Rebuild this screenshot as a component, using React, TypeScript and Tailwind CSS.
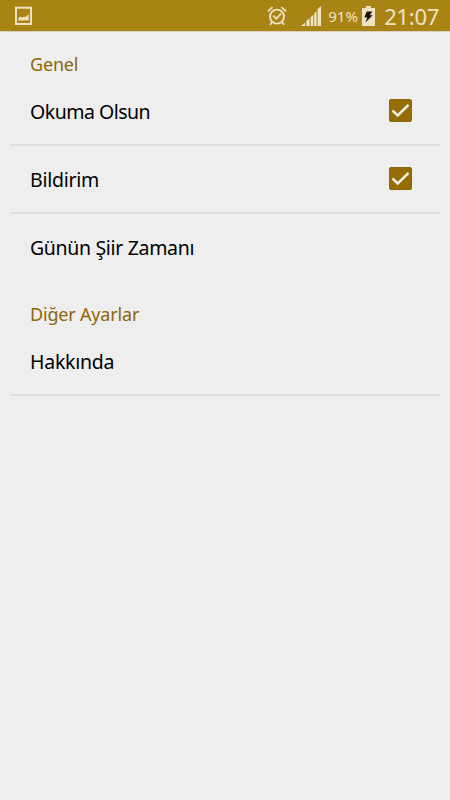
import { useState } from "react";
import clsx from "clsx";

function StatusBar() {
  return (
    <header className="flex h-[31px] items-center bg-[#a98314] pl-[15px] pr-[11px] text-[#efe3c2] shadow-[0_1px_1px_#d9d2be]">
      <svg className="h-[19px] w-[18px]" viewBox="0 0 18 19" fill="none">
        <rect x="1" y="1.7" width="15" height="16.3" stroke="currentColor" strokeWidth="2" />
        <path d="M3.2 14.5V12.5L5.5 10.5L7.5 11.5L9 10.5L10.5 11L13.7 8V14.5Z" fill="currentColor" />
      </svg>

      <div className="ml-auto flex items-center">
        <svg className="h-5 w-5" viewBox="0 0 20 20" fill="none" stroke="currentColor" strokeLinecap="round">
          <circle cx="10" cy="10.6" r="7" strokeWidth="1.9" />
          <path d="M1.5 4.8L5 1.7M18.5 4.8L15 1.7" strokeWidth="1.8" />
          <path d="M4.8 16.2L3.4 18.2M15.2 16.2L16.6 18.2" strokeWidth="1.8" />
          <path d="M6.7 10.2L9.3 12.7L13.7 8" strokeWidth="1.8" />
        </svg>
        <svg className="ml-[14px] h-5 w-5" viewBox="0 0 20 20" fill="currentColor">
          <path d="M0 20L4 16.5V20ZM5.3 20V15L8.5 12.2V20ZM9.6 20V11.2L12.3 8.8V20ZM13.2 20V7.8L15.6 5.2V20ZM16.6 20V3L20 0V20Z" />
        </svg>
        <span className="ml-[7px] w-[34px] whitespace-nowrap text-[15px] leading-5">91%</span>
        <svg className="h-5 w-[13px]" viewBox="0 0 13 20">
          <path d="M4 0H9V2H13V20H0V2H4Z" fill="currentColor" />
          <path d="M4.8 5.5H10.3L8 9.2H10.8L3.3 16.5L5.3 11.5H2.3Z" fill="#17130a" />
        </svg>
        <span className="ml-[9px] text-[22px] leading-[30px] tracking-[-0.3px]">21:07</span>
      </div>
    </header>
  );
}

function SectionTitle({ children }: { children: string }) {
  return (
    <h2 className="flex h-[47px] items-end px-5 pb-px text-[18px] leading-[26px] tracking-[-0.18px] text-[#8f6506]">
      {children}
    </h2>
  );
}

function Checkbox({ checked }: { checked: boolean }) {
  return (
    <span
      className={clsx(
        "mb-px flex size-[23px] items-center justify-center rounded-[2px] border border-[#8d6708]",
        checked && "bg-[#966d05]"
      )}
    >
      {checked && (
        <svg className="h-[21px] w-[21px] shrink-0" viewBox="0 0 21 21" fill="none">
          <path d="M2.5 10.5L7.7 15.5L18.5 4.8" stroke="#f3f0e9" strokeWidth="2.5" />
        </svg>
      )}
    </span>
  );
}

type RowProps = {
  label: string;
  checked?: boolean;
  divider?: boolean;
  className?: string;
  onClick?: () => void;
};

function Row({ label, checked, divider = true, className = "tracking-[-0.25px]", onClick }: RowProps) {
  return (
    <button
      onClick={onClick}
      className={clsx(
        "flex w-full items-center justify-between pl-5 pr-[28px] text-left text-[19.5px] leading-7 text-black",
        divider ? "h-[68px] border-b-2 border-[#dfdfdf]" : "h-[67px]",
        className
      )}
    >
      <span className={divider ? "pt-px" : ""}>{label}</span>
      {checked !== undefined && <Checkbox checked={checked} />}
    </button>
  );
}

export default function App() {
  const [reading, setReading] = useState(true);
  const [notification, setNotification] = useState(true);

  return (
    <div className="h-screen w-full overflow-hidden bg-[#eeeeee] font-['Noto_Sans',sans-serif]">
      <StatusBar />

      <main className="px-[10px]">
        <SectionTitle>Genel</SectionTitle>
        <Row
          label="Okuma Olsun"
          checked={reading}
          className="tracking-[-0.5px]"
          onClick={() => setReading(!reading)}
        />
        <Row label="Bildirim" checked={notification} onClick={() => setNotification(!notification)} />
        <Row label="Günün Şiir Zamanı" divider={false} className="tracking-[-0.33px]" />

        <SectionTitle>Diğer Ayarlar</SectionTitle>
        <Row label="Hakkında" />
      </main>
    </div>
  );
}
